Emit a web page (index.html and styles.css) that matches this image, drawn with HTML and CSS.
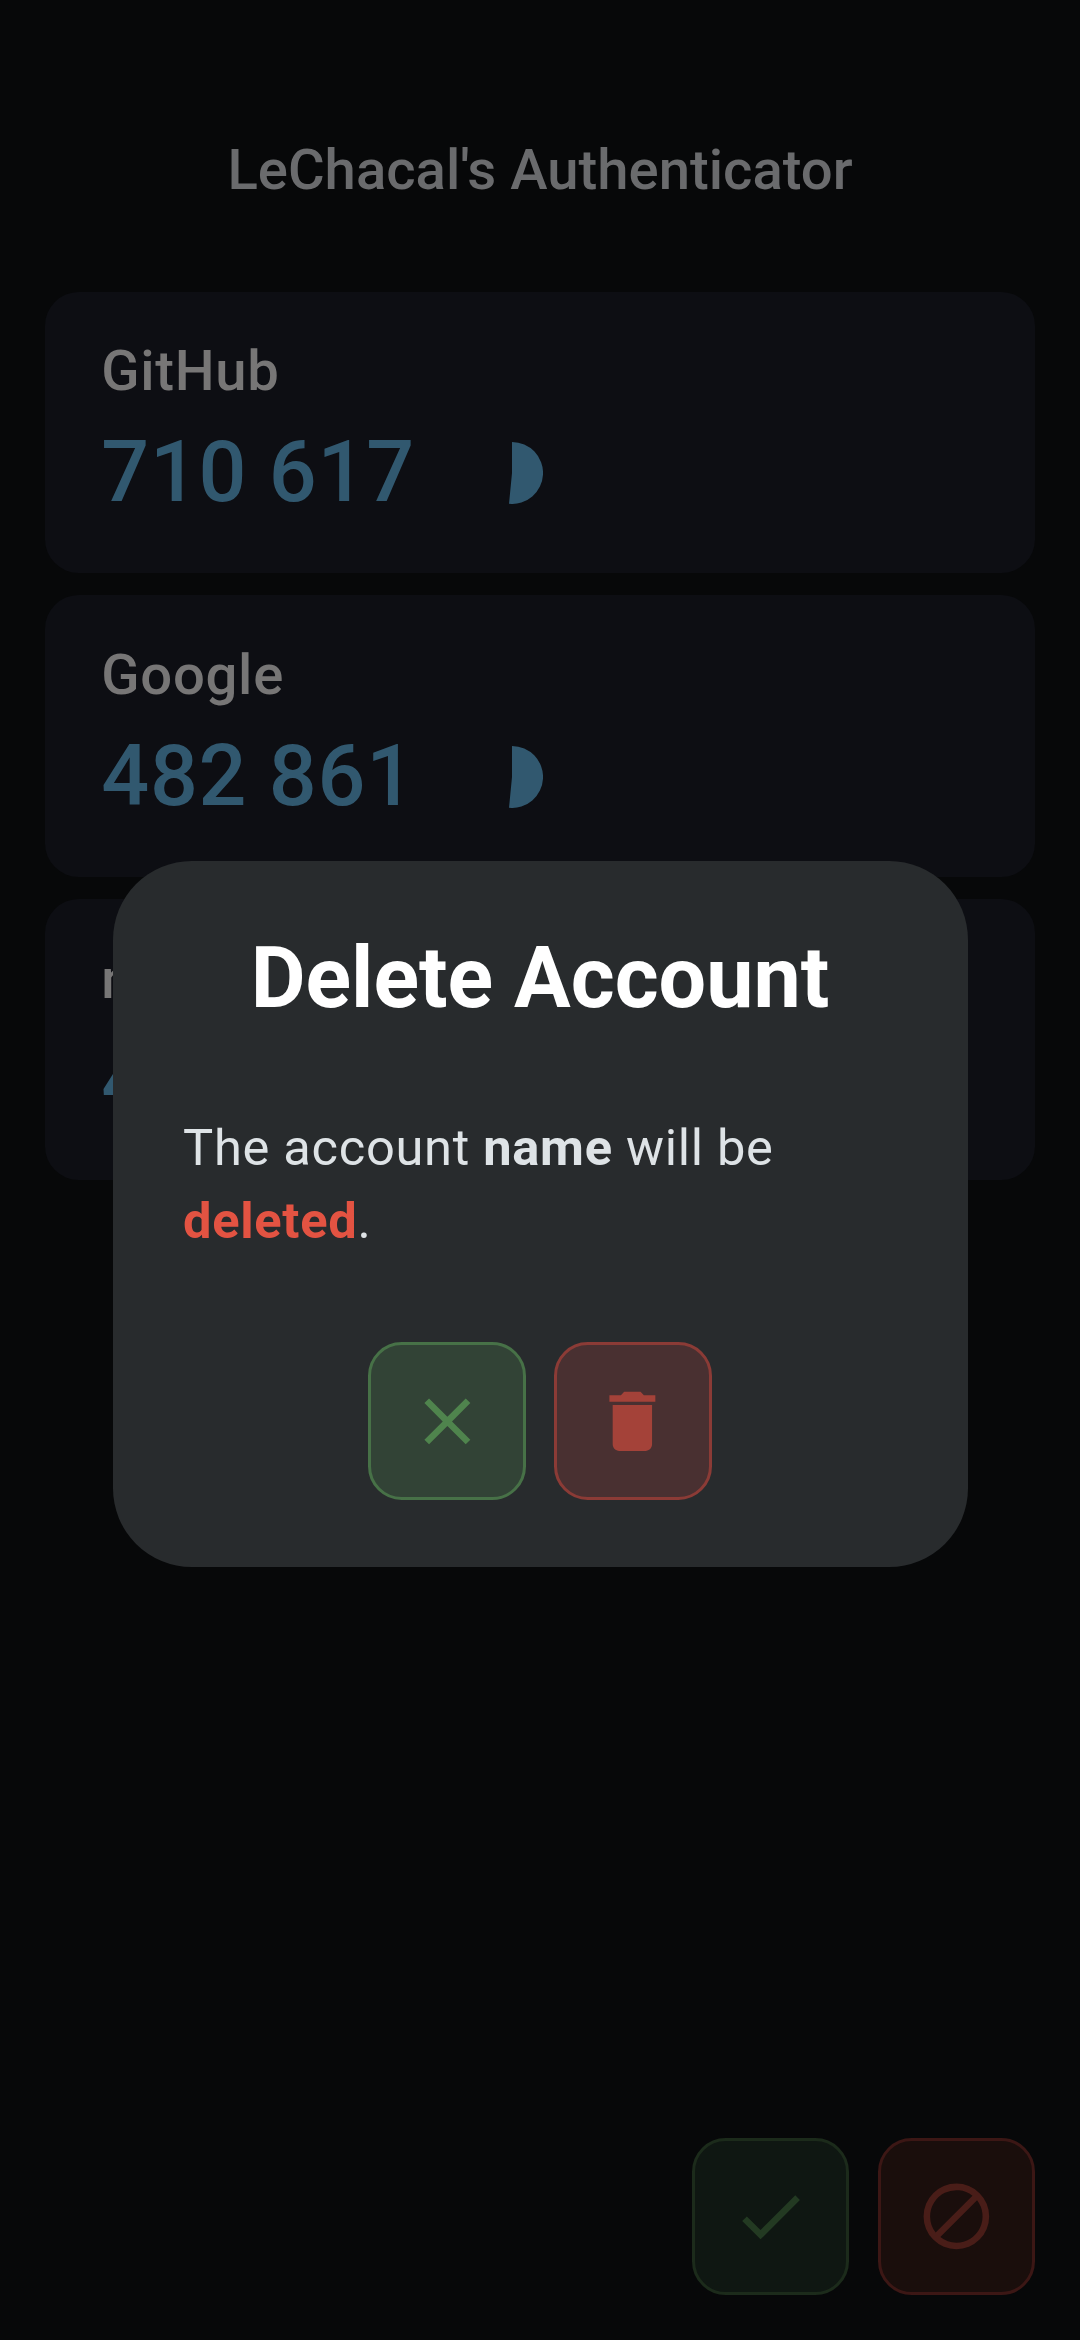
FILE: index.html
```html
<!DOCTYPE html>
<html lang="en">
<head>
<meta charset="utf-8">
<title>LeChacal's Authenticator</title>
<link rel="stylesheet" href="styles.css">
</head>
<body>
<div class="screen">
  <header class="app-bar"><h1 class="app-title">LeChacal's Authenticator</h1></header>
  <main class="accounts">
    <section class="card">
      <div class="account-name">GitHub</div>
      <div class="code-row"><span class="code">710 617</span>
        <svg class="timer" viewBox="-31 -31 62 62"><path d="M0 0V-31A31 31 0 1 1 -3 30.85Z"/></svg></div>
    </section>
    <section class="card">
      <div class="account-name">Google</div>
      <div class="code-row"><span class="code">482 861</span>
        <svg class="timer" viewBox="-31 -31 62 62"><path d="M0 0V-31A31 31 0 1 1 -3 30.85Z"/></svg></div>
    </section>
    <section class="card">
      <div class="account-name">n</div>
      <div class="code-row"><span class="code">4</span></div>
    </section>
  </main>
  <footer class="actions">
    <button class="btn confirm-dim" aria-label="Confirm"><svg class="icon" viewBox="0 0 24 24"><path d="M9 16.17 4.83 12l-1.42 1.41L9 19 21 7l-1.41-1.41z"/></svg></button>
    <button class="btn cancel-dim" aria-label="Cancel"><svg class="icon" viewBox="0 0 24 24"><path d="M12 2a10 10 0 1 0 0 20 10 10 0 0 0 0-20zM4 12a8 8 0 0 1 12.9-6.31L5.69 16.9A7.9 7.9 0 0 1 4 12zm8 8a7.9 7.9 0 0 1-4.9-1.69L18.31 7.1A8 8 0 0 1 12 20z"/></svg></button>
  </footer>
  <div class="overlay">
    <div class="dialog" role="dialog">
      <h2 class="dialog-title">Delete Account</h2>
      <p class="dialog-text">The account <b>name</b> will be <b class="danger">deleted</b>.</p>
      <div class="dialog-actions">
        <button class="btn keep" aria-label="Close"><svg class="icon" viewBox="0 0 24 24"><path d="M19 6.41 17.59 5 12 10.59 6.41 5 5 6.41 10.59 12 5 17.59 6.41 19 12 13.41 17.59 19 19 17.59 13.41 12z"/></svg></button>
        <button class="btn remove" aria-label="Delete"><svg class="icon" viewBox="0 0 24 24"><path d="M6 19c0 1.1.9 2 2 2h8c1.1 0 2-.9 2-2V7H6v12zM19 4h-3.5l-1-1h-5l-1 1H5v2h14V4z"/></svg></button>
      </div>
    </div>
  </div>
</div>
</body>
</html>
```

FILE: styles.css
```css
* { box-sizing: border-box; margin: 0; padding: 0; }
body { background: #070809; font-family: Roboto, "Liberation Sans", sans-serif; }
.screen {
  position: relative;
  width: 1080px;
  height: 2340px;
  overflow: hidden;
  display: flex;
  flex-direction: column;
}
.app-bar {
  height: 291.5px;
  padding-top: 130px;
  text-align: center;
}
.app-title {
  font-size: 56.25px;
  line-height: 80px;
  font-weight: 500;
  color: #6a6b6d;
}
.accounts {
  flex: 1;
  padding: 0 45px;
  display: flex;
  flex-direction: column;
  gap: 22.5px;
}
.card {
  height: 281.25px;
  padding: 39.5px 56.25px 0;
  border-radius: 33.75px;
  background: #0d0e13;
}
.account-name {
  font-size: 56.25px;
  line-height: 80px;
  font-weight: 500;
  letter-spacing: 0.703px;
  color: #777676;
}
.code-row {
  display: flex;
  align-items: center;
  height: 124px;
}
.code {
  width: 379.75px;
  font-size: 84.375px;
  line-height: 124px;
  font-weight: 500;
  letter-spacing: 0.703px;
  color: #31586f;
}
.timer { width: 62px; height: 62px; fill: #31586f; }
.actions {
  display: flex;
  justify-content: flex-end;
  gap: 28.125px;
  padding: 0 45px 45px;
}
.btn {
  width: 157.5px;
  height: 157.5px;
  display: flex;
  align-items: center;
  justify-content: center;
  border: 3px solid;
  border-radius: 33.75px;
}
.icon { width: 78.75px; height: 78.75px; fill: currentColor; }
.confirm-dim { background: #0f1712; border-color: #1c2b1b; color: #233a22; }
.cancel-dim { background: #1a0e0c; border-color: #3c1715; color: #491d18; }
.keep { background: #324336; border-color: #477147; color: #4f844d; }
.remove { background: #493031; border-color: #8b3b36; color: #a44239; }
.overlay {
  position: absolute;
  inset: 0;
  padding-top: 88.5px;
  display: flex;
  align-items: center;
  justify-content: center;
}
.dialog {
  width: 855px;
  height: 706px;
  padding: 68px 67.5px 0;
  border-radius: 78.75px;
  background: #282b2d;
}
.dialog-title {
  text-align: center;
  font-size: 84.375px;
  line-height: 100px;
  font-weight: 700;
  color: #fff;
}
.dialog-text {
  margin-top: 82px;
  padding: 0 3px;
  font-size: 50.625px;
  line-height: 73px;
  letter-spacing: 0.703px;
  color: #dee3e6;
}
.danger { color: #e35342; }
.dialog-actions {
  margin-top: 85px;
  display: flex;
  justify-content: center;
  gap: 28.125px;
}
```
